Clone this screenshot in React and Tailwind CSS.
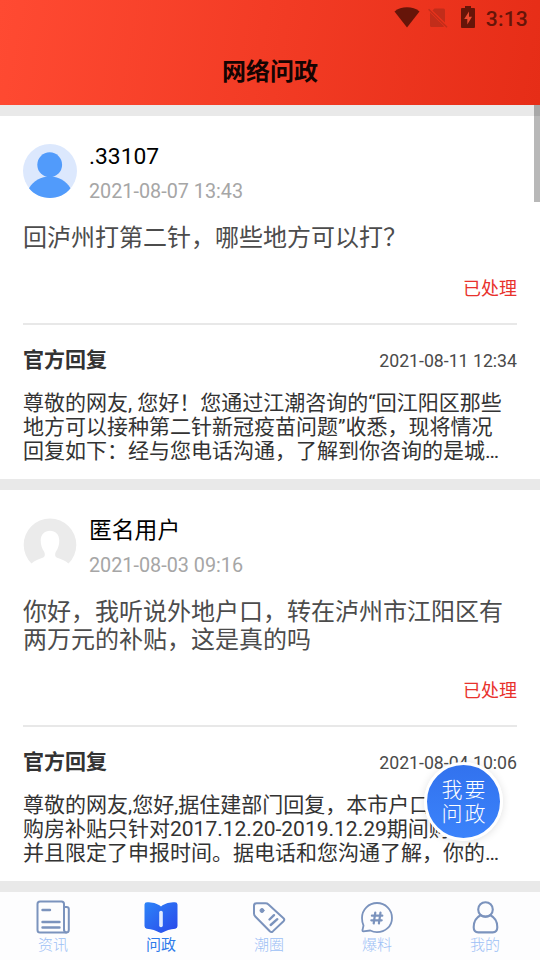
import React, { useState } from 'react';

const posts = [
  {
    id: 1,
    name: '.33107',
    date: '2021-08-07 13:43',
    anonymous: false,
    question: ['回泸州打第二针，哪些地方可以打？'],
    status: '已处理',
    replyDate: '2021-08-11 12:34',
    reply: [
      '尊敬的网友, 您好！您通过江潮咨询的“回江阳区那些',
      '地方可以接种第二针新冠疫苗问题”收悉，现将情况',
      '回复如下：经与您电话沟通，了解到你咨询的是城…',
    ],
  },
  {
    id: 2,
    name: '匿名用户',
    date: '2021-08-03 09:16',
    anonymous: true,
    question: ['你好，我听说外地户口，转在泸州市江阳区有', '两万元的补贴，这是真的吗'],
    status: '已处理',
    replyDate: '2021-08-04 10:06',
    reply: [
      '尊敬的网友,您好,据住建部门回复，本市户口居民',
      '购房补贴只针对2017.12.20-2019.12.29期间购买，',
      '并且限定了申报时间。据电话和您沟通了解，你的…',
    ],
  },
];

const StatusBar = () => (
  <div className="h-[37px] flex items-center justify-end pr-[12px] text-[#661509]">
    <svg className="-mt-[2px]" width="26" height="21" viewBox="0 0 26 21" fill="currentColor">
      <path d="M0.5 4.5C7-1.1 19-1.1 25.5 4.5L13 20.5Z" />
    </svg>
    <svg className="ml-[8px] mr-[1px] -mt-[1px]" width="20" height="20" viewBox="0 0 20 20" fill="#c22d1a">
      <path d="M6.5 .5H15.5Q17 .5 17 2V14.5L4.5 2.4Z" />
      <path d="M2 4.5L16 18.2Q15.8 19 15 19H3.5Q2 19 2 17.5Z" />
      <path d="M.6 1.2L19 19.3" stroke="#c22d1a" strokeWidth="1.4" />
    </svg>
    <svg className="ml-[12px] mr-[1px] -mt-[3px]" width="14" height="22" viewBox="0 0 14 22">
      <path d="M4 0H10V2H13Q14 2 14 3V21Q14 22 13 22H1Q0 22 0 21V3Q0 2 1 2H4Z" fill="currentColor" />
      <path d="M8 5.5L3.2 13H6.3V18.5L11 10.8H8Z" fill="#eb4a30" />
    </svg>
    <span className="ml-[10px] pt-[2px] text-[21px] leading-none font-medium tracking-[0.2px]">3:13</span>
  </div>
);

const UserAvatar = () => (
  <svg width="54" height="54" viewBox="0 0 54 54">
    <circle cx="27" cy="27" r="27" fill="#dce8fd" />
    <circle cx="26.7" cy="20.7" r="12.4" fill="#519bfb" />
    <path d="M6 44.3C10.5 36.5 18 32.5 26.7 32.5S43 36.5 47.5 44.3C42.5 50.5 35.5 54 27 54S11 50.5 6 44.3Z" fill="#519bfb" />
  </svg>
);

const AnonymousAvatar = () => (
  <svg width="54" height="54" viewBox="0 0 54 54">
    <path
      d="M8.5 45.5A26.3 26.3 0 1 1 45.5 45.5C42.5 42.5 37.5 41 34.2 39.8C31.5 38.7 31.8 35.8 33 33.5C35 30.5 36.3 27 36.3 22.5C36.3 16.5 32.5 12.7 27 12.7S17.7 16.5 17.7 22.5C17.7 27 19 30.5 21 33.5C22.3 35.8 22.3 38.7 19.6 39.8C16.3 41 11.5 42.5 8.5 45.5Z"
      fill="#ebebeb"
    />
  </svg>
);

const PostCard = ({ post }) => (
  <div className="mt-[11px] bg-white px-[23px] pt-[28px] pb-[16px]">
    <div className="flex h-[60px]">
      {post.anonymous ? <AnonymousAvatar /> : <UserAvatar />}
      <div className="ml-[12px]">
        <p className="h-[26px] text-[22.8px] leading-[26px] text-black">{post.name}</p>
        <p className="mt-[9px] h-[26px] text-[19.8px] leading-[26px] text-[#a6a6a6]">{post.date}</p>
      </div>
    </div>
    <div className="mt-[20px] text-[24px] leading-[28px] text-[#4c4c4c] whitespace-nowrap">
      {post.question.map((line) => (
        <p key={line} className="h-[28px]">{line}</p>
      ))}
    </div>
    <p className="mt-[26px] h-[22px] text-right text-[18px] leading-[22px] text-[#e8322d]">{post.status}</p>
    <div className="mt-[23px] h-[2px] bg-[#e8e8e8]" />
    <div className="mt-[21px] h-[28px] flex items-center justify-between text-[#333333]">
      <h2 className="text-[21px] leading-[28px] font-bold">官方回复</h2>
      <span className="pt-[1px] text-[17.7px] leading-[24px] text-[#4a4a4a]">{post.replyDate}</span>
    </div>
    <div className="mt-[17px] text-[21px] leading-[24px] text-[#333333] whitespace-nowrap">
      {post.reply.map((line) => (
        <p key={line} className="h-[24px]">{line}</p>
      ))}
    </div>
  </div>
);

const NewsIcon = () => (
  <svg width="34" height="34" viewBox="0 0 34 34" fill="none" stroke="#7b93bd" strokeWidth="2" strokeLinejoin="round" strokeLinecap="round">
    <path d="M28 30V4Q28 1.5 25.5 1.5H4Q1.5 1.5 1.5 4V30Q1.5 32.5 4 32.5H30Q32.8 32.5 32.8 30V9Q32.8 7 30.5 7H28.5" />
    <path d="M28 29Q28 32.5 30.4 32.5" />
    <path d="M6.5 10H14M6.5 22H23.5M6.5 27.5H23.5" strokeWidth="2.4" />
  </svg>
);

const BookIcon = () => (
  <svg width="34" height="34" viewBox="0 0 34 34">
    <defs>
      <linearGradient id="book" x1="0" y1="0" x2="1" y2="1">
        <stop offset="0" stopColor="#2d84f8" />
        <stop offset="1" stopColor="#2b48ea" />
      </linearGradient>
    </defs>
    <path d="M.5 4.5Q.7 2.3 3 2.2C8 2.2 13 3 17 6.5C21 3 26 2.2 31 2.2Q33.3 2.3 33.5 4.5V26Q33.5 28.3 31.3 28.7C26 29.3 22 30.3 18.5 32.6Q17 33.4 15.5 32.6C12 30.3 8 29.3 2.7 28.7Q.5 28.3 .5 26Z" fill="url(#book)" />
    <path d="M17 12.5V25.5" stroke="#e4ecff" strokeWidth="3.6" strokeLinecap="round" />
  </svg>
);

const TagIcon = () => (
  <svg width="34" height="34" viewBox="0 0 34 34" fill="none" stroke="#7b93bd" strokeWidth="2" strokeLinejoin="round" strokeLinecap="round">
    <path d="M4.5 3.2H13.5Q15.2 3.2 16.5 4.4L31.5 18.2Q33 19.7 31.5 21.2L20.8 31.4Q19.3 32.7 17.8 31.3L3.3 16.5Q2 15.2 2 13.5V5.7Q2 3.2 4.5 3.2Z" />
    <circle cx="10" cy="10.5" r="2" fill="#7b93bd" strokeWidth="1" />
    <path d="M17.5 19.5L22 15.2M18.7 25L25.3 19.2" strokeWidth="2.4" />
  </svg>
);

const TopicIcon = () => (
  <svg width="34" height="34" viewBox="0 0 34 34" fill="none" stroke="#7b93bd" strokeWidth="1.8" strokeLinejoin="round" strokeLinecap="round">
    <path d="M3.3 31.3C2.6 31.3 2.3 30.8 2.5 30.1L3.5 25.5C2.5 23.4 2 20.5 2 18C2 9.7 8.7 3 17 3S32 9.7 32 18S25.3 32.2 17 32.2C14.5 32.2 12.2 31.5 10.3 30.5Z" />
    <path d="M15.3 12.5L13.7 23.5M20.5 12.5L18.9 23.5M11.9 15.7H22.3M11.3 20.3H21.7" strokeWidth="2.2" />
  </svg>
);

const MineIcon = () => (
  <svg width="34" height="34" viewBox="0 0 34 34" fill="none" stroke="#7b93bd" strokeWidth="2.1">
    <circle cx="17.5" cy="9.5" r="7.3" />
    <path d="M12.5 15.3C8 17.6 5.7 22 5.7 27.3Q5.7 32.4 10.3 32.4H24.7Q29.3 32.4 29.3 27.3C29.3 22 27 17.6 22.5 15.3C19.3 17 15.7 17 12.5 15.3" />
  </svg>
);

const tabs = [
  { label: '资讯', Icon: NewsIcon },
  { label: '问政', Icon: BookIcon },
  { label: '潮圈', Icon: TagIcon },
  { label: '爆料', Icon: TopicIcon },
  { label: '我的', Icon: MineIcon },
];

const App = () => {
  const [active, setActive] = useState('问政');

  return (
    <div className="relative w-[540px] h-[960px] overflow-hidden flex flex-col bg-[#e9e9e9] font-[Roboto,'Noto_Sans_CJK_SC',sans-serif]">
      <header className="h-[105px] shrink-0 bg-linear-[100deg] from-[#ff4a32] to-[#e62d17]">
        <StatusBar />
        <h1 className="h-[68px] pt-[1px] text-center text-[24px] leading-[68px] font-bold text-[#150402]">网络问政</h1>
      </header>

      <main className="flex-1 min-h-0 overflow-hidden">
        {posts.map((post) => (
          <PostCard key={post.id} post={post} />
        ))}
      </main>

      <nav className="h-[68px] shrink-0 bg-[#fdfdfe]">
        <div className="-ml-px w-[540px] pt-[8px] grid grid-cols-5">
          {tabs.map(({ label, Icon }) => (
            <button key={label} onClick={() => setActive(label)} className="flex flex-col items-center">
              <Icon />
              <span className={active === label ? 'pt-[1px] text-[15px] leading-[20px] text-[#2f7bea]' : 'pt-[1px] text-[15px] leading-[20px] font-light text-[#9cc0f5]'}>
                {label}
              </span>
            </button>
          ))}
        </div>
      </nav>

      {/* scroll indicator */}
      <div className="absolute right-0 top-[105px] w-[6px] h-[97px] bg-black/28" />

      <button className="absolute left-[424px] top-[762px] w-[79px] h-[79px] rounded-full border-[3px] border-white bg-linear-to-b from-[#3272ee] to-[#3b83fb] shadow-[0_1px_8px_rgba(0,0,0,0.12)] text-white text-[21px] leading-[24px] tracking-[2px] pl-[2px] font-light">
        我要
        <br />
        问政
      </button>
    </div>
  );
};

export default App;
